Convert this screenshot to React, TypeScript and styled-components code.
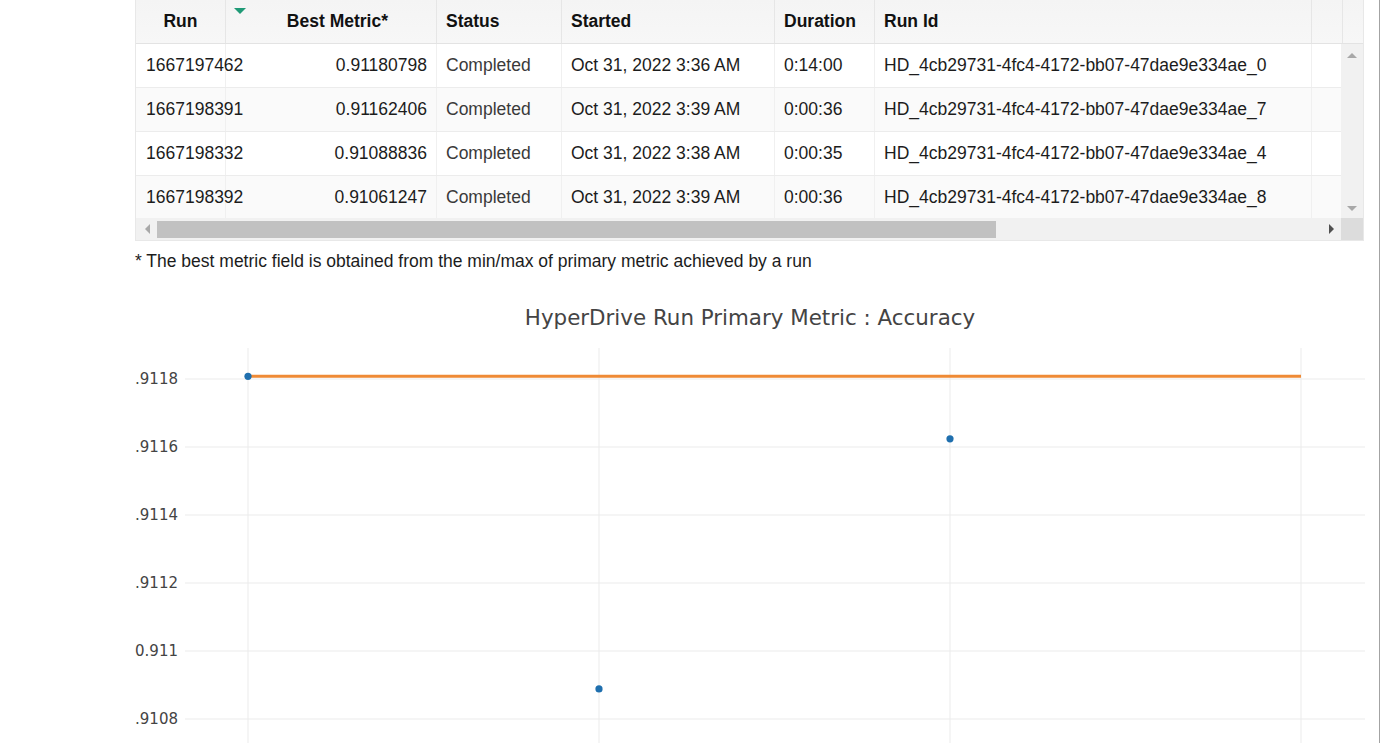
import styled, { createGlobalStyle } from 'styled-components';

const GlobalStyle = createGlobalStyle`
    html, body {
        margin: 0;
        padding: 0;
        background: #fff;
        overflow: hidden;
    }
    body {
        font-family: "Liberation Sans", Arial, sans-serif;
    }
`;

const COLS = '90px 211px 125px 213px 100px 437px 31px';

const Page = styled.div`
    width: 1379px;
    height: 743px;
    border-right: 1px solid #a3a3a3;
    overflow: hidden;
`;

const Cell = styled.div`
    padding-left: 135px;
    width: 1229px;
`;

const TableFrame = styled.div`
    border: 1px solid #e8e8e8;
    border-top: none;
    width: 1227px;
`;

const HeaderRow = styled.div`
    display: grid;
    grid-template-columns: ${COLS} 22px;
    height: 43px;
    background: linear-gradient(#f4f4f4, #f7f7f7);
    border-bottom: 1px solid #e3e3e3;
`;

const HeadCell = styled.div<{ $align?: string; $pad?: number }>`
    position: relative;
    display: flex;
    align-items: center;
    justify-content: ${p => p.$align || 'flex-start'};
    padding: 0 ${p => p.$pad ?? 9}px;
    font-weight: bold;
    font-size: 17.5px;
    color: #111;
    border-right: 1px solid #e6e6e6;
    &:last-child {
        border-right: none;
    }
`;

const SortMark = styled.span`
    position: absolute;
    left: 8px;
    top: 8px;
    width: 0;
    height: 0;
    border-left: 6px solid transparent;
    border-right: 6px solid transparent;
    border-top: 6px solid #1f9a76;
`;

const BodyArea = styled.div`
    display: flex;
    height: 174px;
`;

const Rows = styled.div`
    flex: 1;
    overflow: hidden;
`;

const Row = styled.div<{ $odd?: boolean }>`
    display: grid;
    grid-template-columns: ${COLS};
    height: 43px;
    border-bottom: 1px solid #ececec;
    background: ${p => (p.$odd ? '#fafafa' : '#fff')};
`;

const BodyCell = styled.div<{ $right?: boolean; $muted?: boolean; $spill?: boolean }>`
    display: flex;
    align-items: center;
    justify-content: ${p => (p.$right ? 'flex-end' : 'flex-start')};
    padding: 0 ${p => (p.$right ? 9 : 9)}px 0 ${p => (p.$right ? 0 : p.$spill ? 10 : 9)}px;
    font-size: 17.5px;
    color: ${p => (p.$muted ? '#3a3a3a' : '#1c1c1c')};
    border-right: 1px solid #f0f0f0;
    white-space: nowrap;
    overflow: ${p => (p.$spill ? 'visible' : 'hidden')};
    position: relative;
    z-index: ${p => (p.$spill ? 1 : 0)};
`;

const VScroll = styled.div`
    width: 22px;
    background: #f1f1f1;
    display: flex;
    flex-direction: column;
    justify-content: space-between;
    align-items: center;
    padding: 9px 0 7px;
    box-sizing: border-box;
`;

const Arrow = styled.span<{ $dir: 'up' | 'down' | 'left' | 'right'; $dark?: boolean }>`
    width: 0;
    height: 0;
    border: 5px solid transparent;
    ${p => {
        const c = p.$dark ? '#505050' : '#a8a8a8';
        switch (p.$dir) {
            case 'up': return `border-bottom: 5px solid ${c}; border-top-width: 0;`;
            case 'down': return `border-top: 5px solid ${c}; border-bottom-width: 0;`;
            case 'left': return `border-right: 5px solid ${c}; border-left-width: 0;`;
            default: return `border-left: 5px solid ${c}; border-right-width: 0;`;
        }
    }}
`;

const HScrollRow = styled.div`
    display: flex;
    height: 22px;
`;

const HTrack = styled.div`
    flex: 1;
    display: flex;
    align-items: center;
    background: #f1f1f1;
    padding: 0 7px 0 9px;
    gap: 7px;
`;

const HThumb = styled.div`
    width: 839px;
    height: 17px;
    background: #c1c1c1;
`;

const Spacer = styled.div`
    flex: 1;
`;

const Corner = styled.div`
    width: 22px;
    background: #dcdcdc;
`;

const Footnote = styled.p`
    margin: 10px 0 0;
    font-size: 17.5px;
    color: #1c1c1c;
    line-height: 20px;
`;

const ChartBox = styled.div`
    margin-top: 14px;
    width: 1244px;
`;

const runs = [
    { run: '1667197462', metric: '0.91180798', started: 'Oct 31, 2022 3:36 AM', duration: '0:14:00', id: 'HD_4cb29731-4fc4-4172-bb07-47dae9e334ae_0' },
    { run: '1667198391', metric: '0.91162406', started: 'Oct 31, 2022 3:39 AM', duration: '0:00:36', id: 'HD_4cb29731-4fc4-4172-bb07-47dae9e334ae_7' },
    { run: '1667198332', metric: '0.91088836', started: 'Oct 31, 2022 3:38 AM', duration: '0:00:35', id: 'HD_4cb29731-4fc4-4172-bb07-47dae9e334ae_4' },
    { run: '1667198392', metric: '0.91061247', started: 'Oct 31, 2022 3:39 AM', duration: '0:00:36', id: 'HD_4cb29731-4fc4-4172-bb07-47dae9e334ae_8' },
];

// points in run order (by run number suffix: _0, _4, _7, _8)
const chartValues = [0.91180798, 0.91088836, 0.91162406, 0.91061247];

// y axis: .9118 sits at 94px, 68px per 0.0002
const yOf = (v: number) => 94 + (0.9118 - v) / 0.0002 * 68;
const xTicks = [113, 464, 815, 1166];
const yTicks = ['.9118', '.9116', '.9114', '.9112', '0.911', '.9108'];

function MetricChart() {
    const pts = chartValues.map((v, i) => ({ x: xTicks[i], y: yOf(v) }));
    const best = yOf(0.91180798);
    return (
        <svg width={1244} height={460} style={{ display: 'block' }}>
            <text x={615} y={32} textAnchor="middle" dominantBaseline="central"
                fontFamily="DejaVu Sans, Verdana, sans-serif" fontSize={21.4} fill="#444">
                HyperDrive Run Primary Metric : Accuracy
            </text>
            {xTicks.map(x => (
                <line key={x} x1={x} x2={x} y1={63} y2={460} stroke="#ebebeb" strokeWidth={1} />
            ))}
            {yTicks.map((t, i) => (
                <g key={t}>
                    <line x1={50} x2={1230} y1={94 + i * 68} y2={94 + i * 68} stroke="#ebebeb" strokeWidth={1} />
                    <text x={43} y={94 + i * 68} textAnchor="end" dominantBaseline="central"
                        fontFamily="DejaVu Sans, Verdana, sans-serif" fontSize={15} fill="#444">
                        {t}
                    </text>
                </g>
            ))}
            <line x1={113} x2={1166} y1={best} y2={best} stroke="#ef8a35" strokeWidth={3} />
            {pts.map((p, i) => (
                <circle key={i} cx={p.x} cy={p.y} r={3.6} fill="#1f6fae" />
            ))}
        </svg>
    );
}

export default function App() {
    return (
        <Page>
            <GlobalStyle />
            <Cell>
                <TableFrame>
                    <HeaderRow>
                        <HeadCell $align="center" $pad={0}>Run</HeadCell>
                        <HeadCell $align="flex-end" $pad={48}><SortMark />Best Metric*</HeadCell>
                        <HeadCell>Status</HeadCell>
                        <HeadCell>Started</HeadCell>
                        <HeadCell>Duration</HeadCell>
                        <HeadCell>Run Id</HeadCell>
                        <HeadCell />
                        <HeadCell />
                    </HeaderRow>
                    <BodyArea>
                        <Rows>
                            {runs.map((r, i) => (
                                <Row key={r.run} $odd={i % 2 === 1}>
                                    <BodyCell $spill>{r.run}</BodyCell>
                                    <BodyCell $right>{r.metric}</BodyCell>
                                    <BodyCell $muted>Completed</BodyCell>
                                    <BodyCell>{r.started}</BodyCell>
                                    <BodyCell>{r.duration}</BodyCell>
                                    <BodyCell>{r.id}</BodyCell>
                                    <BodyCell />
                                </Row>
                            ))}
                        </Rows>
                        <VScroll>
                            <Arrow $dir="up" />
                            <Arrow $dir="down" />
                        </VScroll>
                    </BodyArea>
                    <HScrollRow>
                        <HTrack>
                            <Arrow $dir="left" />
                            <HThumb />
                            <Spacer />
                            <Arrow $dir="right" $dark />
                        </HTrack>
                        <Corner />
                    </HScrollRow>
                </TableFrame>
                <Footnote>* The best metric field is obtained from the min/max of primary metric achieved by a run</Footnote>
                <ChartBox>
                    <MetricChart />
                </ChartBox>
            </Cell>
        </Page>
    );
}
